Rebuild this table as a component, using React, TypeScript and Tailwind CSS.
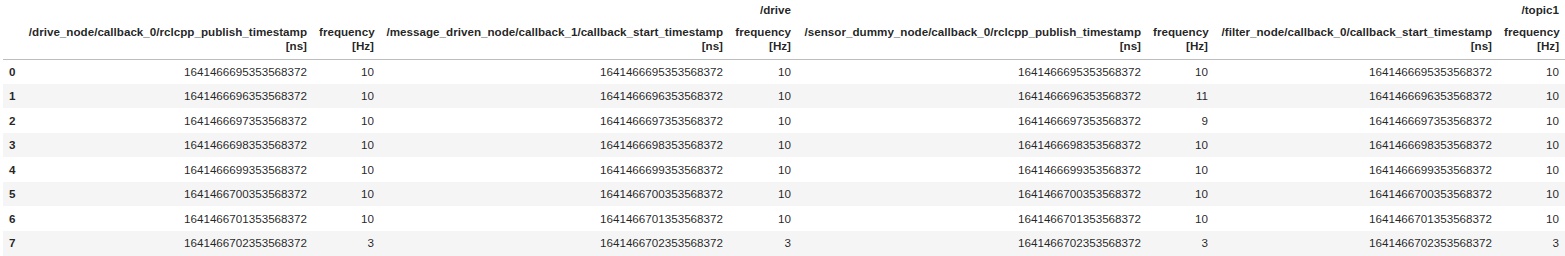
const ROWS: [string, number, string, number, string, number, string, number][] = [
  ['1641466695353568372', 10, '1641466695353568372', 10, '1641466695353568372', 10, '1641466695353568372', 10],
  ['1641466696353568372', 10, '1641466696353568372', 10, '1641466696353568372', 11, '1641466696353568372', 10],
  ['1641466697353568372', 10, '1641466697353568372', 10, '1641466697353568372', 9, '1641466697353568372', 10],
  ['1641466698353568372', 10, '1641466698353568372', 10, '1641466698353568372', 10, '1641466698353568372', 10],
  ['1641466699353568372', 10, '1641466699353568372', 10, '1641466699353568372', 10, '1641466699353568372', 10],
  ['1641466700353568372', 10, '1641466700353568372', 10, '1641466700353568372', 10, '1641466700353568372', 10],
  ['1641466701353568372', 10, '1641466701353568372', 10, '1641466701353568372', 10, '1641466701353568372', 10],
  ['1641466702353568372', 3, '1641466702353568372', 3, '1641466702353568372', 3, '1641466702353568372', 3],
];

const COLUMNS = [
  '/drive_node/callback_0/rclcpp_publish_timestamp',
  'frequency',
  '/message_driven_node/callback_1/callback_start_timestamp',
  'frequency',
  '/sensor_dummy_node/callback_0/rclcpp_publish_timestamp',
  'frequency',
  '/filter_node/callback_0/callback_start_timestamp',
  'frequency',
];

export default function App() {
  return (
    <div className="bg-white w-[1565px] h-[256px] overflow-hidden pl-[3px] text-black/[0.87] text-[11.65px] font-['Liberation_Sans',Arial,sans-serif]">
      <table className="table-fixed border-collapse w-[1562px]">
        <colgroup>
          <col className="w-[19px]" />
          <col className="w-[291px]" />
          <col className="w-[67px]" />
          <col className="w-[349px]" />
          <col className="w-[68px]" />
          <col className="w-[350px]" />
          <col className="w-[67px]" />
          <col className="w-[284px]" />
          <col className="w-[67px]" />
        </colgroup>
        <thead className="border-b border-[#bdbdbd]">
          <tr className="h-[19px]">
            <th className="p-0" />
            <th colSpan={4} className="px-[6px] py-0 text-right font-bold leading-[14px]">
              /drive
            </th>
            <th colSpan={4} className="px-[6px] py-0 text-right font-bold leading-[14px]">
              /topic1
            </th>
          </tr>
          <tr className="h-[40px]">
            <th className="p-0" />
            {COLUMNS.map((c, i) => (
              <th key={i} className="px-[6px] py-0 text-right font-bold leading-[14px] whitespace-nowrap">
                {c}
                <br />
                {i % 2 === 0 ? '[ns]' : '[Hz]'}
              </th>
            ))}
          </tr>
        </thead>
        <tbody>
          {ROWS.map((r, i) => (
            <tr key={i} className={`h-[24.57px] ${i % 2 === 1 ? 'bg-[#f5f5f5]' : 'bg-white'}`}>
              <th className="px-[6px] py-0 text-left font-bold">{i}</th>
              {r.map((v, j) => (
                <td key={j} className="px-[6px] py-0 text-right whitespace-nowrap">
                  {v}
                </td>
              ))}
            </tr>
          ))}
        </tbody>
      </table>
    </div>
  );
}
